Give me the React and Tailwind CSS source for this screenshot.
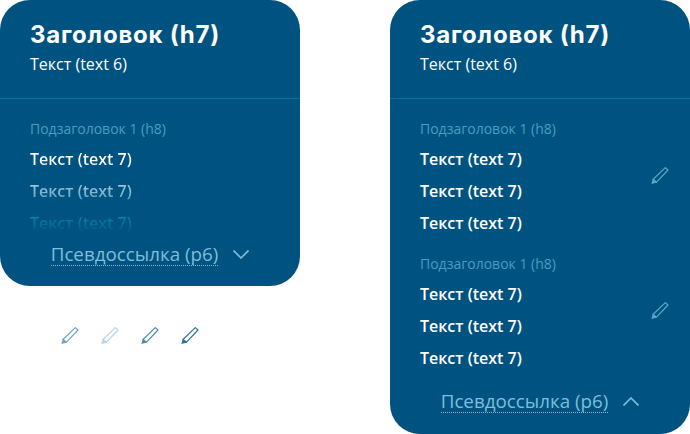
const Pencil = ({ color, className = "" }) => (
  <svg width="20" height="20" viewBox="0 0 20 20" fill="none" className={className}>
    <path d="M3 13.5 15.3 1.6 18 4 6.5 16.2Z" stroke={color} strokeWidth="1.2" strokeLinejoin="round" />
    <path d="M1.4 18 2.8 12.5 7 16.5Z" fill={color} />
  </svg>
);

const Row = ({ children }) => (
  <div className="h-8 flex items-center text-[16px] font-semibold">{children}</div>
);

const Header = () => (
  <div className="h-[99px] border-b border-[#08709a] pl-[30px] pt-[18px]">
    <h2 className="text-[24px] leading-[34px] font-bold tracking-[0.8px] text-white font-['Inter',sans-serif]">Заголовок (h7)</h2>
    <p className="mt-[2px] text-[16px] leading-[20px] text-white">Текст (text 6)</p>
  </div>
);

const Group = ({ edit, faded }) => (
  <div className="relative">
    <div className="text-[14px] leading-[20px] text-[#4a9cc0]">Подзаголовок 1 (h8)</div>
    <div
      className={
        faded
          ? "mt-[4px] text-transparent bg-clip-text bg-[linear-gradient(to_bottom,#ffffff_17%,#85b8cf_50%,#0c86ad_75%,#005380_94%)]"
          : "mt-[4px] text-white"
      }
    >
      <Row>Текст (text 7)</Row>
      <Row>Текст (text 7)</Row>
      <Row>Текст (text 7)</Row>
    </div>
    {edit && <Pencil color="#5aa6c6" className="absolute right-[20px] top-[47px]" />}
  </div>
);

const Toggle = ({ open }) => (
  <button className="flex items-center justify-center gap-[15px] w-full">
    <span className="text-[18.8px] leading-[22px] text-[#7dbedb] border-b border-dotted border-[#7dbedb]">Псевдоссылка (р6)</span>
    <svg width="16" height="9" viewBox="0 0 16 9" fill="none" stroke="#7dbedb" strokeWidth="1.6">
      <path d={open ? "M0.5 8.5 8 1 15.5 8.5" : "M0.5 0.5 8 8 15.5 0.5"} />
    </svg>
  </button>
);

export default function App() {
  return (
    <div className="w-[690px] h-[434px] bg-white flex justify-between items-start overflow-hidden font-['Open_Sans',sans-serif]">
      <div className="w-[300px]">
        <div className="relative h-[285.5px] rounded-[30px] bg-[#005380] overflow-hidden">
          <Header />
          <div className="pl-[30px] pt-[20px]">
            <Group faded />
          </div>
          <div className="absolute left-0 right-0 top-[243px]">
            <Toggle />
          </div>
        </div>
        <div className="mt-[40px] pl-[60px] flex gap-[20px]">
          <Pencil color="#6ea6c2" />
          <Pencil color="#b5d6e6" />
          <Pencil color="#4f8cab" />
          <Pencil color="#2f7396" />
        </div>
      </div>

      <div className="w-[300px] h-[434px] rounded-[30px] bg-[#005380] overflow-hidden">
        <Header />
        <div className="pl-[30px] pt-[20px] flex flex-col gap-[15px]">
          <Group edit />
          <Group edit />
        </div>
        <div className="mt-[16px]">
          <Toggle open />
        </div>
      </div>
    </div>
  );
}
